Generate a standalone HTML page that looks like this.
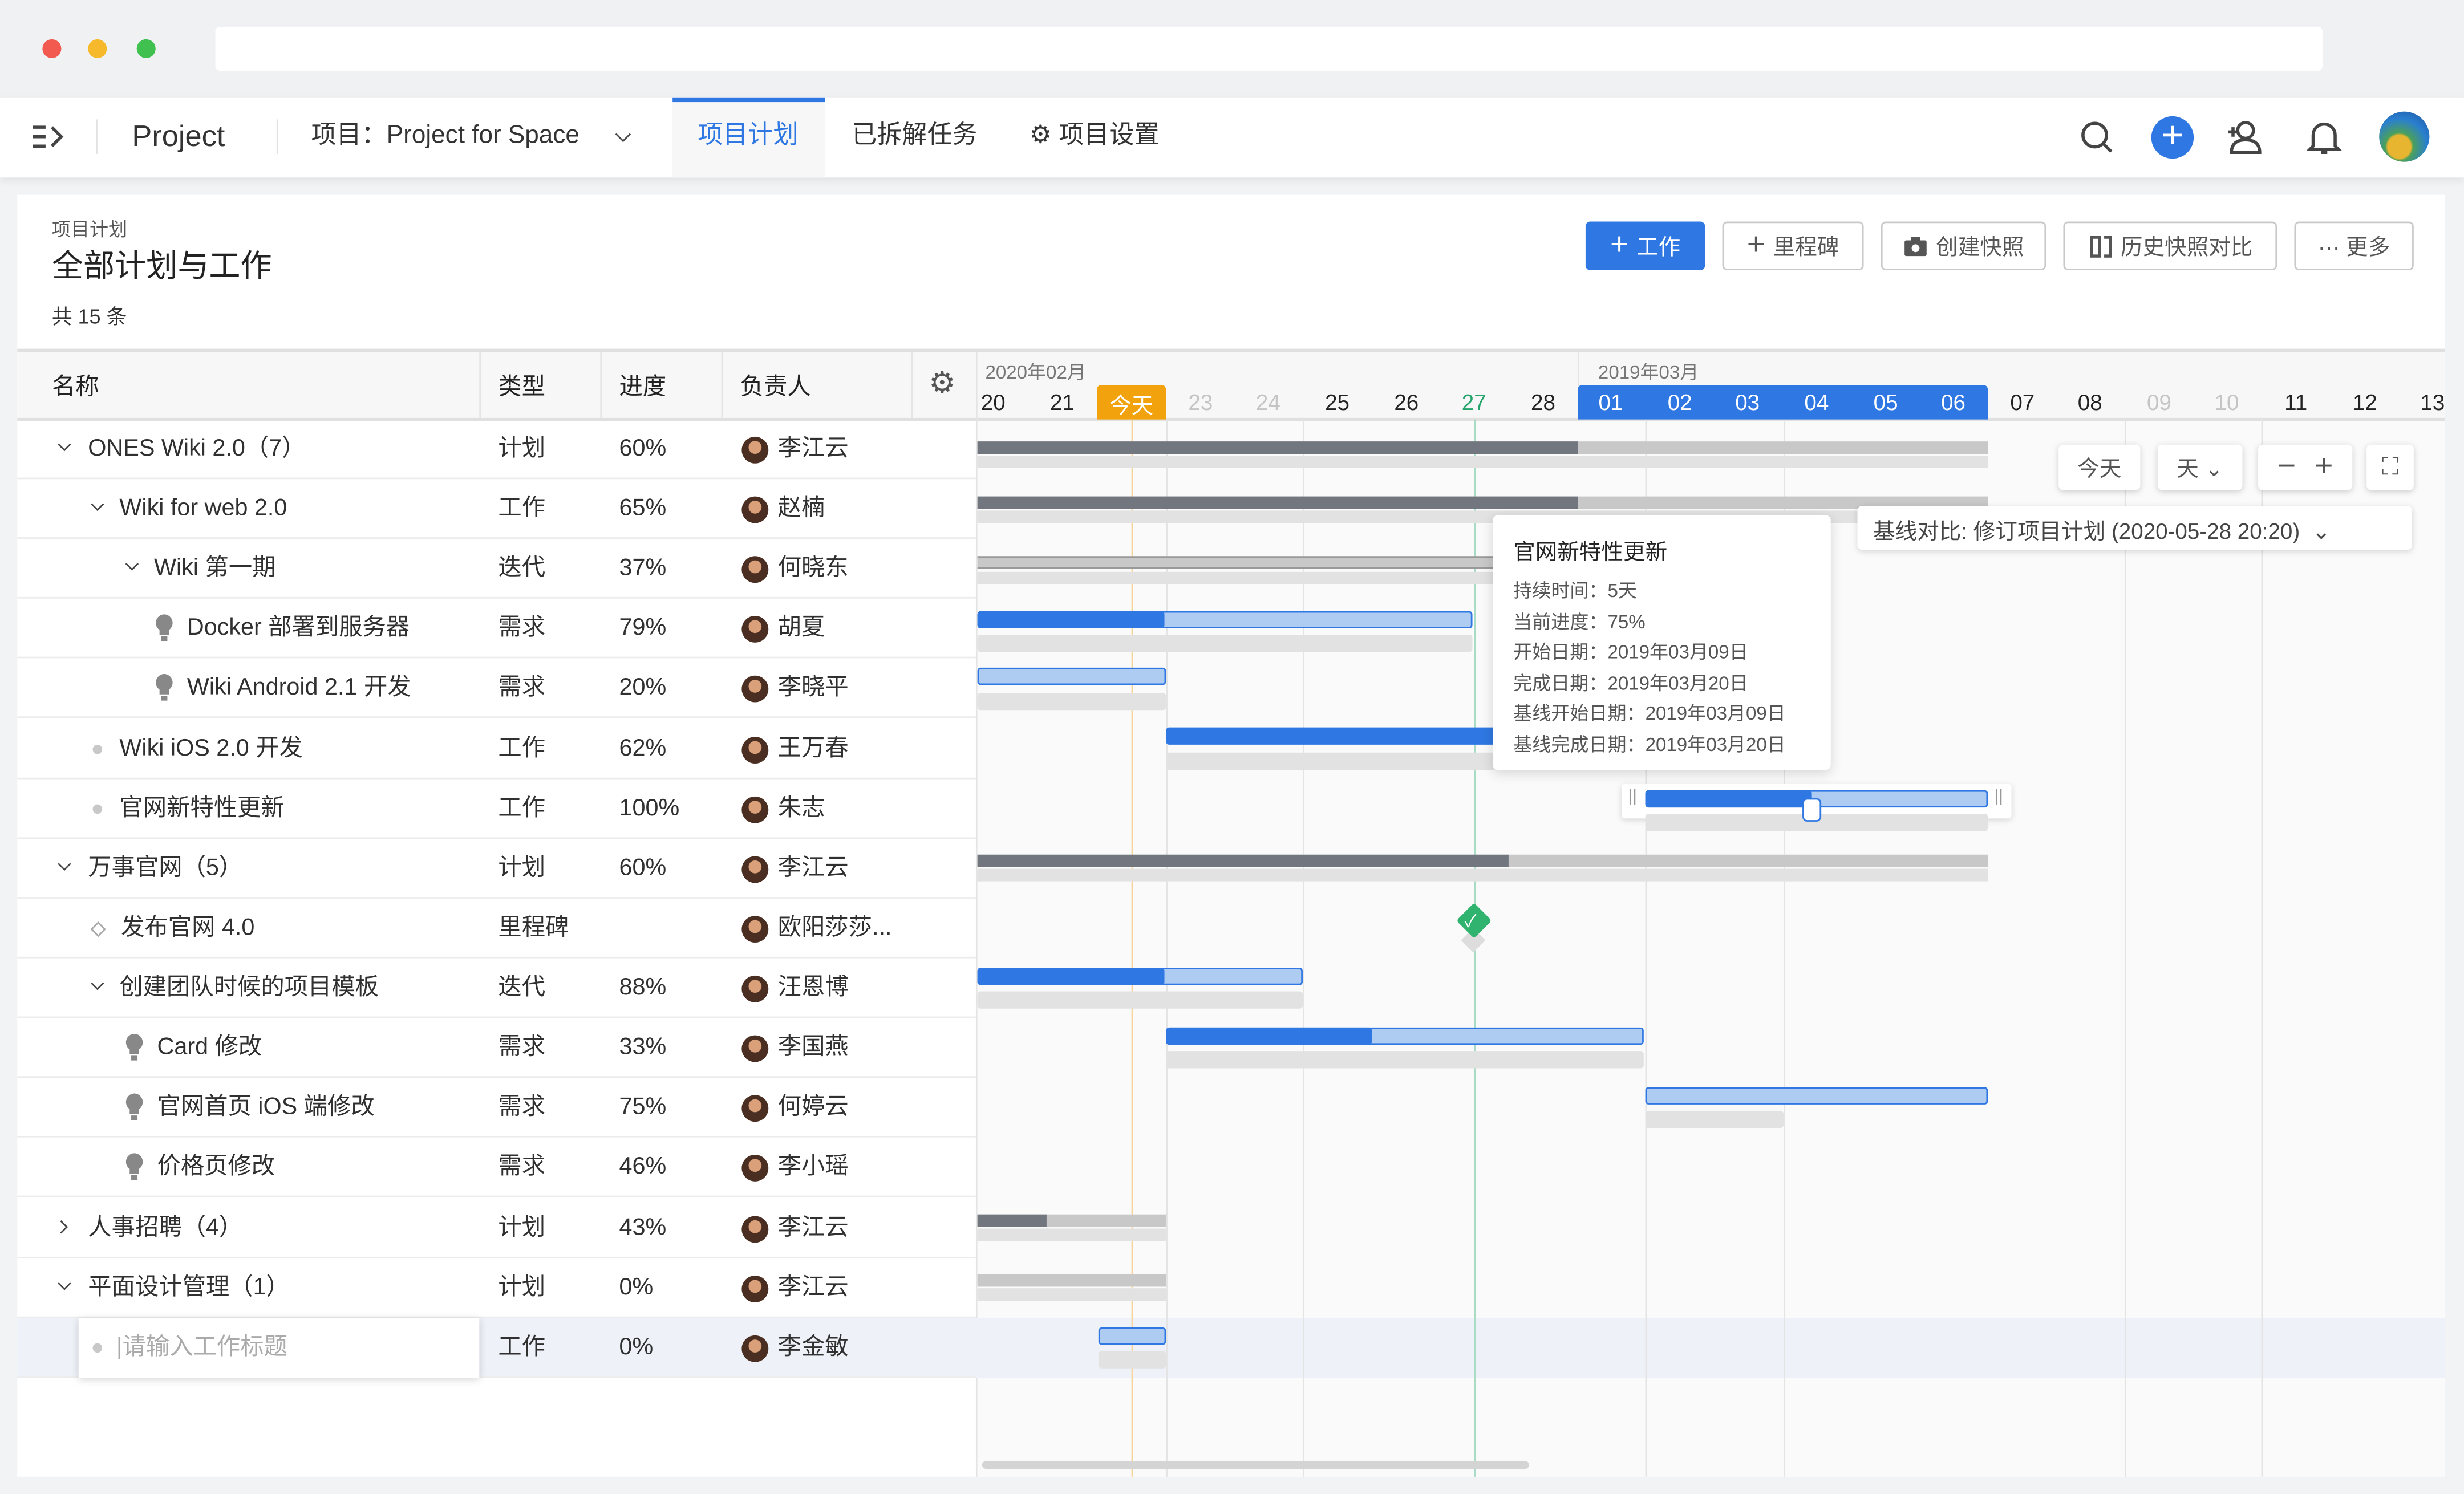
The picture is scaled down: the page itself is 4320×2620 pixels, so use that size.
<!DOCTYPE html>
<html><head><meta charset="utf-8">
<style>
*{box-sizing:border-box;margin:0;padding:0}
html,body{width:4320px;height:2619px;overflow:hidden;background:#f2f3f5}
#s{position:absolute;left:0;top:0;width:1568px;height:951px;transform:scale(2.75510);transform-origin:0 0;font-family:"Liberation Sans","Noto Sans CJK SC",sans-serif;color:#303030;background:#f2f3f5}
.a{position:absolute}
.t{position:absolute;white-space:nowrap}
.btn{position:absolute;top:141px;height:31px;border:1px solid #c9c9c9;border-radius:3px;background:#fff;font-size:14px;color:#555;display:flex;align-items:center;justify-content:center;gap:5px}
.row{position:absolute;left:11px;width:610px;height:38.2px;border-bottom:1px solid #ececec;font-size:15px}
.row .t{top:9px;line-height:20px}
.av{position:absolute;left:461px;top:11px;width:17px;height:17px;border-radius:50%;background:radial-gradient(circle at 50% 40%,#d9a07a 0 30%,#4a2e22 32%)}
.nm{left:484px}
.ty{left:306px}
.pr{left:383px}
.chev{position:absolute;width:6px;height:6px;border-right:1.6px solid #444;border-bottom:1.6px solid #444;transform:rotate(45deg);top:13px}
.dot{position:absolute;width:6px;height:6px;border-radius:50%;background:#c8c8c8;top:16px}
.bulb{position:absolute;top:10px;width:11px;height:17px}
.bar{position:absolute;height:11px;border-radius:2px}
.bl{background:#aecbf2;border:1px solid #2f78e3}
.bd{background:#2f78e3}
.base{position:absolute;height:11px;background:#e2e2e2;border-radius:2px}
.plan{position:absolute;height:8px;background:#c8c8c8}
.pd{position:absolute;height:8px;background:#72767e}
.vl{position:absolute;top:267px;bottom:11px;width:1px;background:#e4e4e4}
.day{position:absolute;top:248px;width:40px;text-align:center;font-size:14px;color:#222}
.g{color:#c4c4c4}
.cb{position:absolute;top:283px;height:29px;background:#fff;border-radius:3px;box-shadow:0 1px 4px rgba(0,0,0,.18);font-size:14px;color:#555;display:flex;align-items:center;justify-content:center}
.nv{line-height:22px}
</style></head><body><div id="s">
<div class="a" style="left:0;top:0;width:1568px;height:62px;background:#f0f1f3"></div>
<div class="a" style="left:27px;top:25px;width:12px;height:12px;border-radius:50%;background:#f25a4f"></div>
<div class="a" style="left:56px;top:25px;width:12px;height:12px;border-radius:50%;background:#f6b92c"></div>
<div class="a" style="left:87px;top:25px;width:12px;height:12px;border-radius:50%;background:#3fc04f"></div>
<div class="a" style="left:137px;top:17px;width:1341px;height:28px;background:#fff;border-radius:3px"></div>
<div class="a" style="left:0;top:62px;width:1568px;height:51px;background:#fff;box-shadow:0 2px 5px rgba(0,0,0,.08)"></div>
<div class="a" style="left:428px;top:62px;width:97px;height:51px;background:#f7f7f7;border-top:3px solid #2f78e3"></div>
<svg class="a" style="left:20px;top:79px" width="22" height="16" viewBox="0 0 22 16"><path d="M1 2h8M1 8h8M1 14h8M13 2l6 6-6 6" stroke="#444" stroke-width="2" fill="none"/></svg>
<div class="a" style="left:61px;top:76px;width:1px;height:22px;background:#e2e2e2"></div>
<div class="t nv" style="left:84px;top:77px;font-size:19px;color:#333">Project</div>
<div class="a" style="left:176px;top:76px;width:1px;height:22px;background:#e2e2e2"></div>
<div class="t nv" style="left:198px;top:76px;font-size:16px;color:#333">项目：Project for Space</div>
<div class="a" style="left:393px;top:82px;width:7px;height:7px;border-right:1.6px solid #444;border-bottom:1.6px solid #444;transform:rotate(45deg)"></div>
<div class="t nv" style="left:444px;top:76px;font-size:16px;color:#2f78e3">项目计划</div>
<div class="t nv" style="left:542px;top:76px;font-size:16px;color:#333">已拆解任务</div>
<div class="t nv" style="left:655px;top:76px;font-size:16px;color:#333">⚙ 项目设置</div>
<svg class="a" style="left:1323px;top:76px" width="24" height="24"><circle cx="10" cy="10" r="7.5" stroke="#444" stroke-width="2" fill="none"/><path d="M15.5 15.5l5 5" stroke="#444" stroke-width="2"/></svg>
<div class="a" style="left:1369px;top:74px;width:27px;height:27px;border-radius:50%;background:#2f78e3;color:#fff;font-size:24px;line-height:26px;text-align:center">+</div>
<svg class="a" style="left:1417px;top:75px" width="28" height="26"><circle cx="12" cy="8" r="5" stroke="#444" stroke-width="2" fill="none"/><path d="M3 22c0-6 4-8 9-8s9 2 9 8zM1 9h6M4 6v6" stroke="#444" stroke-width="2" fill="none"/></svg>
<svg class="a" style="left:1467px;top:75px" width="24" height="26"><path d="M5 18V11a7 7 0 0 1 14 0v7l2 2H3zM10 22h4" stroke="#444" stroke-width="2" fill="none"/></svg>
<div class="a" style="left:1514px;top:71px;width:32px;height:32px;border-radius:50%;background:radial-gradient(circle at 40% 70%,#e8b531 0 25%,#4ba05a 30%,#2a7fcf 60%,#1a4f9e)"></div>
<div class="a" style="left:11px;top:124px;width:1545px;height:816px;background:#fff"></div>
<div class="t" style="left:33px;top:137px;font-size:12px;color:#555">项目计划</div>
<div class="t" style="left:33px;top:153px;font-size:20px;color:#222">全部计划与工作</div>
<div class="t" style="left:33px;top:191px;font-size:13px;color:#333">共 15 条</div>
<div class="btn" style="left:1009px;width:76px;background:#2f78e3;border-color:#2f78e3;color:#fff"><b style="font-size:20px;font-weight:400">+</b>工作</div>
<div class="btn" style="left:1096px;width:90px"><b style="font-size:20px;font-weight:400">+</b>里程碑</div>
<div class="btn" style="left:1197px;width:105px"><svg width="16" height="14"><rect x="1" y="3" width="14" height="10" rx="1" fill="#555"/><rect x="5" y="1" width="6" height="3" fill="#555"/><circle cx="8" cy="8" r="2.5" fill="#fff"/></svg>创建快照</div>
<div class="btn" style="left:1313px;width:136px"><svg width="16" height="14"><path d="M2 1h5v12H2zM10 1h4v12h-4" stroke="#555" stroke-width="2" fill="none"/></svg>历史快照对比</div>
<div class="btn" style="left:1460px;width:76px">··· 更多</div>
<div class="a" style="left:11px;top:222px;width:1545px;height:46px;background:#f7f7f7;border-top:2px solid #e0e0e0;border-bottom:2px solid #e0e0e0"></div>
<div class="a" style="left:305px;top:224px;width:1px;height:42px;background:#e4e4e4"></div>
<div class="a" style="left:382px;top:224px;width:1px;height:42px;background:#e4e4e4"></div>
<div class="a" style="left:459px;top:224px;width:1px;height:42px;background:#e4e4e4"></div>
<div class="a" style="left:580px;top:224px;width:1px;height:42px;background:#e4e4e4"></div>
<div class="a" style="left:621px;top:224px;width:1px;height:716px;background:#e4e4e4"></div>
<div class="a" style="left:1004px;top:224px;width:1px;height:22px;background:#e4e4e4"></div>
<div class="t" style="left:33px;top:235px;font-size:15px;color:#222">名称</div>
<div class="t" style="left:317px;top:235px;font-size:15px;color:#222">类型</div>
<div class="t" style="left:394px;top:235px;font-size:15px;color:#222">进度</div>
<div class="t" style="left:471px;top:235px;font-size:15px;color:#222">负责人</div>
<div class="t" style="left:591px;top:233px;font-size:19px;color:#555">⚙</div>
<div class="a" style="left:622px;top:268px;width:934px;height:672px;background:#fafafa"></div>
<div class="a" style="left:11px;top:839px;width:1545px;height:38px;background:#eef2f8"></div>
<div class="vl" style="left:742px"></div><div class="vl" style="left:829px"></div>
<div class="vl" style="left:1047px"></div><div class="vl" style="left:1135px"></div>
<div class="vl" style="left:1352px"></div><div class="vl" style="left:1439px"></div>
<div class="vl" style="left:720px;background:#f7d49a"></div>
<div class="vl" style="left:938px;background:#a9dcc4"></div>
<div class="t" style="left:627px;top:228px;font-size:12px;color:#777">2020年02月</div>
<div class="t" style="left:1017px;top:228px;font-size:12px;color:#777">2019年03月</div>
<div class="a" style="left:698px;top:245px;width:44px;height:22px;background:#f1a20c;border-radius:3px 3px 0 0"></div>
<div class="a" style="left:1004px;top:245px;width:261px;height:22px;background:#2f78e3;border-radius:3px 3px 0 0"></div>
<div class="day" style="left:612px">20</div><div class="day" style="left:656px">21</div>
<div class="day" style="left:700px;color:#fff">今天</div><div class="day g" style="left:744px">23</div>
<div class="day g" style="left:787px">24</div><div class="day" style="left:831px">25</div>
<div class="day" style="left:875px">26</div><div class="day" style="left:918px;color:#23a46a">27</div>
<div class="day" style="left:962px">28</div>
<div class="day" style="left:1005px;color:#fff">01</div><div class="day" style="left:1049px;color:#fff">02</div>
<div class="day" style="left:1092px;color:#fff">03</div><div class="day" style="left:1136px;color:#fff">04</div>
<div class="day" style="left:1180px;color:#fff">05</div><div class="day" style="left:1223px;color:#fff">06</div>
<div class="day" style="left:1267px">07</div><div class="day" style="left:1310px">08</div>
<div class="day g" style="left:1354px">09</div><div class="day g" style="left:1397px">10</div>
<div class="day" style="left:1441px">11</div><div class="day" style="left:1485px">12</div>
<div class="day" style="left:1528px">13</div>
<div class="row" style="top:267px"><div class="chev" style="left:27px"></div><div class="t" style="left:45px">ONES Wiki 2.0（7）</div><div class="t ty">计划</div><div class="t pr">60%</div><div class="av"></div><div class="t nm">李江云</div></div>
<div class="row" style="top:305px"><div class="chev" style="left:48px"></div><div class="t" style="left:65px">Wiki for web 2.0</div><div class="t ty">工作</div><div class="t pr">65%</div><div class="av"></div><div class="t nm">赵楠</div></div>
<div class="row" style="top:343px"><div class="chev" style="left:70px"></div><div class="t" style="left:87px">Wiki 第一期</div><div class="t ty">迭代</div><div class="t pr">37%</div><div class="av"></div><div class="t nm">何晓东</div></div>
<div class="row" style="top:381px"><svg class="bulb" style="left:88px" viewBox="0 0 11 17"><path d="M5.5 0a5.5 5.5 0 0 0-3 10v3h6v-3a5.5 5.5 0 0 0-3-10zM3.5 14h4v3h-4z" fill="#888"/></svg><div class="t" style="left:108px">Docker 部署到服务器</div><div class="t ty">需求</div><div class="t pr">79%</div><div class="av"></div><div class="t nm">胡夏</div></div>
<div class="row" style="top:419px"><svg class="bulb" style="left:88px" viewBox="0 0 11 17"><path d="M5.5 0a5.5 5.5 0 0 0-3 10v3h6v-3a5.5 5.5 0 0 0-3-10zM3.5 14h4v3h-4z" fill="#888"/></svg><div class="t" style="left:108px">Wiki Android 2.1 开发</div><div class="t ty">需求</div><div class="t pr">20%</div><div class="av"></div><div class="t nm">李晓平</div></div>
<div class="row" style="top:458px"><div class="dot" style="left:48px"></div><div class="t" style="left:65px">Wiki iOS 2.0 开发</div><div class="t ty">工作</div><div class="t pr">62%</div><div class="av"></div><div class="t nm">王万春</div></div>
<div class="row" style="top:496px"><div class="dot" style="left:48px"></div><div class="t" style="left:65px">官网新特性更新</div><div class="t ty">工作</div><div class="t pr">100%</div><div class="av"></div><div class="t nm">朱志</div></div>
<div class="row" style="top:534px"><div class="chev" style="left:27px"></div><div class="t" style="left:45px">万事官网（5）</div><div class="t ty">计划</div><div class="t pr">60%</div><div class="av"></div><div class="t nm">李江云</div></div>
<div class="row" style="top:572px"><div class="a" style="left:48px;top:16px;width:7px;height:7px;border:1.3px solid #aaa;transform:rotate(45deg)"></div><div class="t" style="left:66px">发布官网 4.0</div><div class="t ty">里程碑</div><div class="av"></div><div class="t nm">欧阳莎莎...</div></div>
<div class="row" style="top:610px"><div class="chev" style="left:48px"></div><div class="t" style="left:65px">创建团队时候的项目模板</div><div class="t ty">迭代</div><div class="t pr">88%</div><div class="av"></div><div class="t nm">汪恩博</div></div>
<div class="row" style="top:648px"><svg class="bulb" style="left:69px" viewBox="0 0 11 17"><path d="M5.5 0a5.5 5.5 0 0 0-3 10v3h6v-3a5.5 5.5 0 0 0-3-10zM3.5 14h4v3h-4z" fill="#888"/></svg><div class="t" style="left:89px">Card 修改</div><div class="t ty">需求</div><div class="t pr">33%</div><div class="av"></div><div class="t nm">李国燕</div></div>
<div class="row" style="top:686px"><svg class="bulb" style="left:69px" viewBox="0 0 11 17"><path d="M5.5 0a5.5 5.5 0 0 0-3 10v3h6v-3a5.5 5.5 0 0 0-3-10zM3.5 14h4v3h-4z" fill="#888"/></svg><div class="t" style="left:89px">官网首页 iOS 端修改</div><div class="t ty">需求</div><div class="t pr">75%</div><div class="av"></div><div class="t nm">何婷云</div></div>
<div class="row" style="top:724px"><svg class="bulb" style="left:69px" viewBox="0 0 11 17"><path d="M5.5 0a5.5 5.5 0 0 0-3 10v3h6v-3a5.5 5.5 0 0 0-3-10zM3.5 14h4v3h-4z" fill="#888"/></svg><div class="t" style="left:89px">价格页修改</div><div class="t ty">需求</div><div class="t pr">46%</div><div class="av"></div><div class="t nm">李小瑶</div></div>
<div class="row" style="top:763px"><div class="chev" style="left:25px;top:15px;transform:rotate(-45deg)"></div><div class="t" style="left:45px">人事招聘（4）</div><div class="t ty">计划</div><div class="t pr">43%</div><div class="av"></div><div class="t nm">李江云</div></div>
<div class="row" style="top:801px"><div class="chev" style="left:27px"></div><div class="t" style="left:45px">平面设计管理（1）</div><div class="t ty">计划</div><div class="t pr">0%</div><div class="av"></div><div class="t nm">李江云</div></div>
<div class="row" style="top:839px;background:#eef2f8"><div class="a" style="left:39px;top:0;width:255px;height:38px;background:#fff;box-shadow:0 1px 5px rgba(0,0,0,.18)"></div><div class="dot" style="left:48px"></div><div class="t" style="left:63px;color:#aaa">|请输入工作标题</div><div class="t ty">工作</div><div class="t pr">0%</div><div class="av"></div><div class="t nm">李金敏</div></div>
<div class="plan" style="left:622px;top:281px;width:643px"></div><div class="pd" style="left:622px;top:281px;width:382px"></div><div class="base" style="left:622px;top:290px;width:643px;height:8px;border-radius:0"></div>
<div class="plan" style="left:622px;top:316px;width:643px"></div><div class="pd" style="left:622px;top:316px;width:382px"></div><div class="base" style="left:622px;top:325px;width:560px;height:8px;border-radius:0"></div>
<div class="plan" style="left:622px;top:354px;width:330px;border-top:1px solid #999;border-bottom:1px solid #999"></div><div class="base" style="left:622px;top:364px;width:330px;height:8px;border-radius:0"></div>
<div class="bar bl" style="left:622px;top:389px;width:315px"></div><div class="bar bd" style="left:622px;top:389px;width:119px"></div><div class="base" style="left:622px;top:404px;width:315px"></div>
<div class="bar bl" style="left:622px;top:425px;width:120px"></div><div class="base" style="left:622px;top:441px;width:120px"></div>
<div class="bar bd" style="left:742px;top:463px;width:210px"></div><div class="base" style="left:742px;top:479px;width:210px"></div>
<div class="a" style="left:1032px;top:499px;width:248px;height:22px;background:#fff;border-radius:2px;box-shadow:0 1px 4px rgba(0,0,0,.15)"></div>
<div class="bar bl" style="left:1047px;top:503px;width:218px"></div><div class="bar bd" style="left:1047px;top:503px;width:106px"></div><div class="base" style="left:1047px;top:518px;width:218px"></div>
<div class="t" style="left:1036px;top:501px;font-size:11px;color:#999">||</div><div class="t" style="left:1269px;top:501px;font-size:11px;color:#999">||</div>
<div class="a" style="left:1147px;top:508px;width:12px;height:15px;background:#fff;border:1.5px solid #2f78e3;border-radius:3px"></div>
<div class="plan" style="left:622px;top:544px;width:643px"></div><div class="pd" style="left:622px;top:544px;width:338px"></div><div class="base" style="left:622px;top:553px;width:643px;height:8px;border-radius:0"></div>
<div class="a" style="left:932px;top:593px;width:11px;height:11px;background:#ddd;transform:rotate(45deg)"></div>
<div class="a" style="left:930px;top:578px;width:16px;height:16px;background:#2fb36e;transform:rotate(45deg);border-radius:2px"></div>
<div class="t" style="left:932px;top:578px;color:#fff;font-size:11px">✓</div>
<div class="bar bl" style="left:622px;top:616px;width:207px"></div><div class="bar bd" style="left:622px;top:616px;width:119px"></div><div class="base" style="left:622px;top:631px;width:207px"></div>
<div class="bar bl" style="left:742px;top:654px;width:304px"></div><div class="bar bd" style="left:742px;top:654px;width:131px"></div><div class="base" style="left:742px;top:669px;width:304px"></div>
<div class="bar bl" style="left:1047px;top:692px;width:218px"></div><div class="base" style="left:1047px;top:707px;width:88px"></div>
<div class="plan" style="left:622px;top:773px;width:120px"></div><div class="pd" style="left:622px;top:773px;width:44px"></div><div class="base" style="left:622px;top:782px;width:120px;height:8px;border-radius:0"></div>
<div class="plan" style="left:622px;top:811px;width:120px"></div><div class="base" style="left:622px;top:820px;width:120px;height:8px;border-radius:0"></div>
<div class="bar bl" style="left:699px;top:845px;width:43px"></div><div class="base" style="left:699px;top:860px;width:43px"></div>
<div class="a" style="left:625px;top:930px;width:348px;height:5px;background:#d4d4d4;border-radius:3px"></div>
<div class="a" style="left:950px;top:328px;width:215px;height:162px;background:#fff;border-radius:3px;box-shadow:0 2px 8px rgba(0,0,0,.15)"></div>
<div class="t" style="left:963px;top:341px;font-size:14px;color:#222">官网新特性更新</div>
<div class="t" style="left:963px;top:367px;font-size:12px;color:#555;line-height:19.6px">持续时间：5天<br>当前进度：75%<br>开始日期：2019年03月09日<br>完成日期：2019年03月20日<br>基线开始日期：2019年03月09日<br>基线完成日期：2019年03月20日</div>
<div class="cb" style="left:1310px;width:52px">今天</div>
<div class="cb" style="left:1373px;width:54px">天 ⌄</div>
<div class="cb" style="left:1437px;width:60px;font-size:20px">− <span style="margin-left:12px">+</span></div>
<div class="cb" style="left:1506px;width:30px;font-size:15px">⛶</div>
<div class="a" style="left:1182px;top:322px;width:353px;height:28px;background:#fff;border-radius:3px;box-shadow:0 1px 4px rgba(0,0,0,.15)"></div>
<div class="t" style="left:1192px;top:328px;font-size:14px;color:#444">基线对比: 修订项目计划 (2020-05-28 20:20)&nbsp; ⌄</div>
</div></body></html>
